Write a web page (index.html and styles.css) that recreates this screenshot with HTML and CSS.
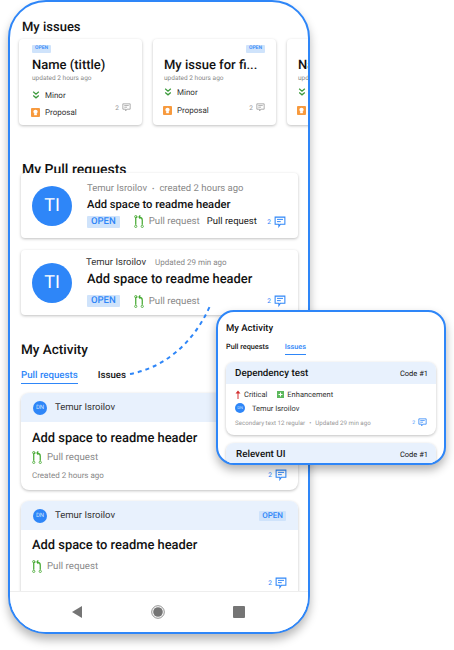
FILE: index.html
```html
<!DOCTYPE html>
<html>
<head>
    <title>My Activity</title>
    <link rel="stylesheet" href="styles.css">
</head>
<body>
    <svg width="0" height="0" class="defs">
        <symbol id="comment" viewBox="0 0 16 16">
            <path d="M1.500 1.500h13v9.500h-6l-2 3v-3h-5z" fill="none" stroke="currentColor" stroke-width="1.400"/>
            <path d="M4 4.500h8M4 7.500h5" stroke="currentColor" stroke-width="1.300"/>
        </symbol>
        <symbol id="pull" viewBox="0 0 12 16">
            <path d="M2 3v9M10 12V6Q10 3 6.500 2.500M7.500 .5L6 2.500l1.500 2M2 2.500h2" fill="none" stroke="#43a82f" stroke-width="1.500"/>
            <circle cx="2" cy="14" r="1.400" fill="none" stroke="#43a82f"/>
            <circle cx="10" cy="14" r="1.400" fill="none" stroke="#43a82f"/>
            <circle cx="2" cy="2" r="1.400" fill="none" stroke="#43a82f"/>
        </symbol>
        <symbol id="minor" viewBox="0 0 10 10">
            <path d="M1.500 1l3.500 3 3.500-3M1.500 5.500l3.500 3 3.500-3" fill="none" stroke="#3c9a3c" stroke-width="1.600"/>
        </symbol>
        <symbol id="proposal" viewBox="0 0 10 10">
            <rect width="10" height="10" rx="1" fill="#f79a3e"/>
            <circle cx="5" cy="4.300" r="2.400" fill="#fff"/>
            <rect x="3.500" y="6" width="3" height="2" fill="#fff"/>
        </symbol>
    </svg>

    <div class="stage">
        <div class="phone">
            <div class="screen">
                <h2 class="heading heading-issues">My issues</h2>
                <div class="issue-row">
                    <div class="issue-card">
                        <div class="issue-badge"><span class="tag tag-small">OPEN</span></div>
                        <div class="issue-title">Name (tittle)</div>
                        <div class="issue-time">updated 2 hours ago</div>
                        <div class="issue-meta issue-meta-first"><svg class="icon-minor"><use href="#minor"/></svg>Minor</div>
                        <div class="issue-meta"><svg class="icon-proposal"><use href="#proposal"/></svg>Proposal
                            <span class="count count-grey">2 <svg class="icon-comment"><use href="#comment"/></svg></span>
                        </div>
                    </div>
                    <div class="issue-card issue-card-alt">
                        <div class="issue-badge issue-badge-right"><span class="tag tag-small">OPEN</span></div>
                        <div class="issue-title">My issue for fi...</div>
                        <div class="issue-time">updated 2 hours ago</div>
                        <div class="issue-meta"><svg class="icon-minor"><use href="#minor"/></svg>Minor</div>
                        <div class="issue-meta"><svg class="icon-proposal"><use href="#proposal"/></svg>Proposal
                            <span class="count count-grey count-low">2 <svg class="icon-comment"><use href="#comment"/></svg></span>
                        </div>
                    </div>
                    <div class="issue-card issue-card-alt">
                        <div class="issue-badge"></div>
                        <div class="issue-title">Name (tittle)</div>
                        <div class="issue-time">updated 2 hours ago</div>
                        <div class="issue-meta"><svg class="icon-minor"><use href="#minor"/></svg>Minor</div>
                        <div class="issue-meta"><svg class="icon-proposal"><use href="#proposal"/></svg>Proposal</div>
                    </div>
                </div>

                <h2 class="heading heading-pull">My Pull requests</h2>
                <div class="pr-card">
                    <div class="avatar">TI</div>
                    <div class="pr-body">
                        <div class="pr-top"><span>Temur Isroilov</span><span class="dot">•</span><span>created 2 hours ago</span></div>
                        <div class="pr-title">Add space to readme header</div>
                        <div class="pr-bottom">
                            <span class="tag">OPEN</span>
                            <svg class="icon-pull"><use href="#pull"/></svg>
                            <span class="pr-kind">Pull request</span>
                            <span class="pr-kind-dark">Pull request</span>
                            <span class="count">2 <svg class="icon-comment-big"><use href="#comment"/></svg></span>
                        </div>
                    </div>
                </div>
                <div class="pr-card pr-card-second">
                    <div class="avatar">TI</div>
                    <div class="pr-body">
                        <div class="pr-top pr-top-alt"><span class="pr-author">Temur Isroilov</span><span class="pr-updated">Updated 29 min ago</span></div>
                        <div class="pr-title pr-title-big">Add space to readme header</div>
                        <div class="pr-bottom">
                            <span class="tag">OPEN</span>
                            <svg class="icon-pull"><use href="#pull"/></svg>
                            <span class="pr-kind">Pull request</span>
                            <span class="count">2 <svg class="icon-comment-big"><use href="#comment"/></svg></span>
                        </div>
                    </div>
                </div>

                <h2 class="heading heading-activity">My Activity</h2>
                <div class="tabs">
                    <span class="tab tab-active">Pull requests</span>
                    <span class="tab">Issues</span>
                </div>

                <div class="activity-card">
                    <div class="activity-head">
                        <span class="mini-avatar">DN</span>
                        <span class="activity-name">Temur Isroilov</span>
                    </div>
                    <div class="activity-body">
                        <div class="pr-title pr-title-big">Add space to readme header</div>
                        <div class="activity-kind"><svg class="icon-pull"><use href="#pull"/></svg><span class="pr-kind">Pull request</span></div>
                        <div class="activity-foot">
                            <span class="activity-time">Created 2 hours ago</span>
                            <span class="count">2 <svg class="icon-comment-big"><use href="#comment"/></svg></span>
                        </div>
                    </div>
                </div>
                <div class="activity-card activity-card-next">
                    <div class="activity-head">
                        <span class="mini-avatar">DN</span>
                        <span class="activity-name">Temur Isroilov</span>
                        <span class="tag tag-head">OPEN</span>
                    </div>
                    <div class="activity-body">
                        <div class="pr-title pr-title-big">Add space to readme header</div>
                        <div class="activity-kind"><svg class="icon-pull"><use href="#pull"/></svg><span class="pr-kind">Pull request</span></div>
                        <div class="activity-foot">
                            <span class="activity-time"></span>
                            <span class="count">2 <svg class="icon-comment-big"><use href="#comment"/></svg></span>
                        </div>
                    </div>
                </div>
            </div>
            <div class="navbar">
                <svg width="10" height="12" viewBox="0 0 10 12"><path d="M0 6L10 0v12z" fill="#757575"/></svg>
                <svg width="14" height="14" viewBox="0 0 14 14"><circle cx="7" cy="7" r="6.300" fill="none" stroke="#757575" stroke-width=".8"/><circle cx="7" cy="7" r="4.800" fill="#757575"/></svg>
                <svg width="12" height="12" viewBox="0 0 12 12"><rect width="12" height="12" rx="1" fill="#757575"/></svg>
            </div>
        </div>

        <svg class="connector" width="100" height="80" viewBox="0 0 100 80">
            <path d="M2 74C34 68 64 46 82 6" fill="none" stroke="#2e86f8" stroke-width="2" stroke-dasharray="4 4"/>
        </svg>

        <div class="popover">
            <div class="pop-title">My Activity</div>
            <div class="pop-tabs">
                <span class="pop-tab">Pull requests</span>
                <span class="pop-tab pop-tab-active">Issues</span>
            </div>
            <div class="pop-card">
                <div class="pop-head"><span class="pop-name">Dependency test</span><span class="pop-code">Code #1</span></div>
                <div class="pop-body">
                    <div class="pop-labels">
                        <span class="pop-label"><svg width="6" height="9" viewBox="0 0 6 9"><path d="M3 9V3" stroke="#d32f2f"/><path d="M.5 3.500L3 .5l2.500 3z" fill="#d32f2f"/></svg>Critical</span>
                        <span class="pop-label"><svg width="7" height="7" viewBox="0 0 7 7"><rect width="7" height="7" fill="#5cb85c"/><path d="M3.500 1.500v4M1.500 3.500h4" stroke="#fff"/></svg>Enhancement</span>
                    </div>
                    <div class="pop-user"><span class="pop-avatar">DN</span>Temur Isroilov</div>
                    <div class="pop-foot">
                        <span>Secondary text 12 regular</span><span class="pop-dot">•</span><span>Updated 29 min ago</span>
                        <span class="count count-small">2 <svg class="icon-comment"><use href="#comment"/></svg></span>
                    </div>
                </div>
            </div>
            <div class="pop-card pop-card-next">
                <div class="pop-head"><span class="pop-name pop-name-next">Relevent UI</span><span class="pop-code">Code #1</span></div>
            </div>
        </div>
    </div>
</body>
</html>
```

FILE: styles.css
```css
body {
    font-family: Roboto, sans-serif;
    text-rendering: geometricPrecision;
    background-color: #fff;
    color: #111;
    margin: 0;
    padding: 0;
}
.defs {
    display: block;
    height: 0;
}
.stage {
    position: relative;
    width: 454px;
    height: 650px;
    overflow: hidden;
}
.phone {
    box-sizing: border-box;
    width: 302px;
    height: 634px;
    margin-left: 8px;
    background-color: #fff;
    border: 2px solid #2e86f8;
    border-radius: 38px;
    box-shadow: 0 6px 10px rgba(0,0,0,0.28);
    display: flex;
    flex-direction: column;
    overflow: hidden;
}
.screen {
    flex: 1;
    min-height: 0;
    overflow: hidden;
}

.heading {
    margin: 0 0 0 12px;
    font-size: 14px;
    line-height: 18px;
    font-weight: 500;
}
.heading-issues {
    padding-top: 17px;
    margin-bottom: 2px;
    font-size: 13px;
}
.heading-pull {
    margin-top: 36px;
    margin-bottom: -6px;
}
.heading-activity {
    margin-left: 11px;
    margin-top: 26px;
    font-size: 13.500px;
}

.issue-row {
    display: flex;
    gap: 11px;
    padding-left: 9px;
}
.issue-card {
    box-sizing: border-box;
    flex-shrink: 0;
    width: 123px;
    height: 86px;
    padding: 5px 11px 0 13px;
    background-color: #fff;
    border-radius: 4px;
    box-shadow: 0 1px 3px rgba(0,0,0,0.25);
}
.issue-card-alt {
    padding-left: 11px;
}
.issue-badge {
    height: 8px;
    display: flex;
    padding-top: 1px;
}
.issue-badge-right {
    justify-content: flex-end;
}
.issue-title {
    margin-top: 4px;
    font-size: 13px;
    line-height: 17px;
    font-weight: 500;
    white-space: nowrap;
}
.issue-time {
    font-size: 6.500px;
    line-height: 8px;
    color: #888;
}
.issue-meta {
    display: flex;
    align-items: center;
    height: 18px;
    margin-top: 1px;
    font-size: 8px;
    color: #333;
}
.issue-meta-first {
    margin-top: 4px;
}
.issue-meta + .issue-meta {
    margin-left: -1px;
    margin-top: 0;
}
.issue-meta-first + .issue-meta {
    margin-top: -1px;
}
.icon-minor {
    width: 8px;
    height: 8px;
    margin: 0 5px 0 0;
}
.icon-proposal {
    width: 9px;
    height: 9px;
    margin-right: 5px;
}

.tag {
    display: inline-block;
    padding: 0 4px;
    font-size: 9.500px;
    line-height: 12px;
    font-weight: 500;
    color: #2e86f8;
    background-color: #cfe3fb;
    border-radius: 1px;
}
.tag-small {
    padding: 0 3px;
    font-size: 5px;
    line-height: 7px;
}
.tag-head {
    margin-left: auto;
    padding: 0 3px;
    line-height: 10px;
    font-size: 8px;
}

.count {
    margin-left: auto;
    display: inline-flex;
    align-items: center;
    gap: 3px;
    font-size: 6.500px;
    color: #2e86f8;
}
.count-grey {
    color: #999;
    margin-top: -9px;
}
.count-low {
    margin-top: -5px;
}
.icon-comment {
    width: 9px;
    height: 9px;
}
.icon-comment-big {
    width: 12px;
    height: 12px;
}

.pr-card {
    position: relative;
    box-sizing: border-box;
    height: 65px;
    margin: 0 10px 0 11px;
    padding-left: 11px;
    display: flex;
    align-items: center;
    gap: 15px;
    background-color: #fff;
    border-radius: 4px;
    box-shadow: 0 1px 3px rgba(0,0,0,0.25);
}
.pr-card-second {
    margin-top: 12px;
}
.avatar {
    flex-shrink: 0;
    width: 40px;
    height: 40px;
    border-radius: 50%;
    background-color: #2e86f8;
    color: #fff;
    font-size: 18px;
    line-height: 40px;
    text-align: center;
}
.pr-body {
    flex: 1;
    min-width: 0;
    padding-right: 12px;
}
.pr-top {
    display: flex;
    font-size: 9.500px;
    line-height: 12px;
    color: #888;
}
.dot {
    margin: 0 5px;
    font-size: 7px;
}
.pr-top-alt {
    margin-left: -1px;
    align-items: center;
}
.pr-author {
    color: #333;
}
.pr-updated {
    margin-left: 9px;
    font-size: 8px;
}
.pr-title {
    margin-top: 3px;
    font-size: 11.200px;
    line-height: 14px;
    font-weight: 500;
    white-space: nowrap;
}
.pr-title-big {
    font-size: 12.900px;
    line-height: 16px;
}
.pr-bottom {
    display: flex;
    align-items: center;
    margin-top: 3px;
    height: 14px;
}
.pr-card-second .pr-bottom {
    margin-top: 6px;
}
.icon-pull {
    width: 10px;
    height: 13px;
    margin: 0 5px 0 14px;
}
.pr-kind {
    font-size: 9.700px;
    color: #888;
}
.pr-kind-dark {
    margin-left: 7px;
    font-size: 9.500px;
    color: #222;
}

.tabs {
    display: flex;
    gap: 20px;
    margin: 10px 0 0 11px;
}
.tab {
    font-size: 9.700px;
    line-height: 13px;
    font-weight: 500;
    padding-bottom: 1px;
}
.tab-active {
    color: #2e86f8;
    border-bottom: 1px solid #2e86f8;
}

.activity-card {
    position: relative;
    margin: 9px 10px 0 11px;
    height: 97px;
    background-color: #fff;
    border-radius: 8px;
    box-shadow: 0 1px 3px rgba(0,0,0,0.25);
    overflow: hidden;
}
.activity-card-next {
    margin-top: 11px;
}
.activity-head {
    display: flex;
    align-items: center;
    height: 29px;
    padding: 0 12px;
    background-color: #e8f1fd;
}
.mini-avatar {
    width: 14px;
    height: 14px;
    border-radius: 50%;
    background-color: #2e86f8;
    color: #cfe3fb;
    font-size: 6px;
    line-height: 14px;
    text-align: center;
    margin-right: 8px;
}
.activity-name {
    font-size: 9.500px;
    color: #333;
}
.activity-body {
    padding: 6px 11px 0;
}
.activity-card-next .activity-body {
    padding-top: 5px;
}
.activity-kind {
    display: flex;
    align-items: center;
    margin-top: 4px;
}
.activity-card-next .activity-kind {
    margin-top: 6px;
}
.activity-kind .icon-pull {
    margin-left: 0;
}
.activity-foot {
    display: flex;
    align-items: center;
    height: 14px;
    margin-top: 4px;
}
.activity-card-next .activity-foot {
    margin-top: 3px;
}
.activity-time {
    font-size: 8px;
    color: #888;
}

.navbar {
    flex-shrink: 0;
    height: 40px;
    display: flex;
    align-items: center;
    background-color: #fff;
    border-top: 1px solid #eee;
    padding-left: 62px;
    gap: 68.500px;
}

.connector {
    position: absolute;
    left: 128px;
    top: 300px;
}

.popover {
    position: absolute;
    left: 216px;
    top: 310px;
    box-sizing: border-box;
    width: 230px;
    height: 155px;
    padding: 0 8px;
    background-color: #fff;
    border: 2px solid #2e86f8;
    border-radius: 18px;
    box-shadow: 0 5px 10px rgba(0,0,0,0.3);
    overflow: hidden;
}
.pop-title {
    margin-top: 11px;
    font-size: 9.500px;
    line-height: 12px;
    font-weight: 500;
}
.pop-tabs {
    display: flex;
    gap: 16px;
    margin-top: 7px;
}
.pop-tab {
    font-size: 7.300px;
    line-height: 10px;
    font-weight: 500;
    padding-bottom: 2px;
}
.pop-tab-active {
    color: #2e86f8;
    border-bottom: 1px solid #2e86f8;
}
.pop-card {
    margin-top: 7px;
    border-radius: 8px;
    background-color: #fff;
    box-shadow: 0 1px 3px rgba(0,0,0,0.25);
    overflow: hidden;
}
.pop-card-next {
    margin-top: 8px;
}
.pop-head {
    display: flex;
    align-items: center;
    justify-content: space-between;
    height: 22px;
    padding: 0 8px 0 9px;
    background-color: #e8f1fd;
}
.pop-name {
    font-size: 9.800px;
    font-weight: 500;
}
.pop-name-next {
    margin-left: 1px;
    font-size: 9.800px;
}
.pop-code {
    font-size: 7.500px;
}
.pop-body {
    padding: 4px 9px 0 9px;
    height: 47px;
}
.pop-labels {
    display: flex;
    gap: 10px;
    height: 12px;
    align-items: center;
}
.pop-label {
    display: flex;
    align-items: center;
    gap: 3px;
    font-size: 7.500px;
    color: #333;
}
.pop-user {
    display: flex;
    align-items: center;
    margin-top: 3px;
    font-size: 7.500px;
    color: #333;
}
.pop-avatar {
    width: 10px;
    height: 10px;
    margin-right: 7px;
    border-radius: 50%;
    background-color: #2e86f8;
    color: #cfe3fb;
    font-size: 4px;
    line-height: 10px;
    text-align: center;
}
.pop-foot {
    display: flex;
    align-items: center;
    margin-top: 5px;
    font-size: 6.200px;
    color: #999;
}
.pop-dot {
    margin: 0 4px;
}
.count-small {
    font-size: 5px;
}
```
